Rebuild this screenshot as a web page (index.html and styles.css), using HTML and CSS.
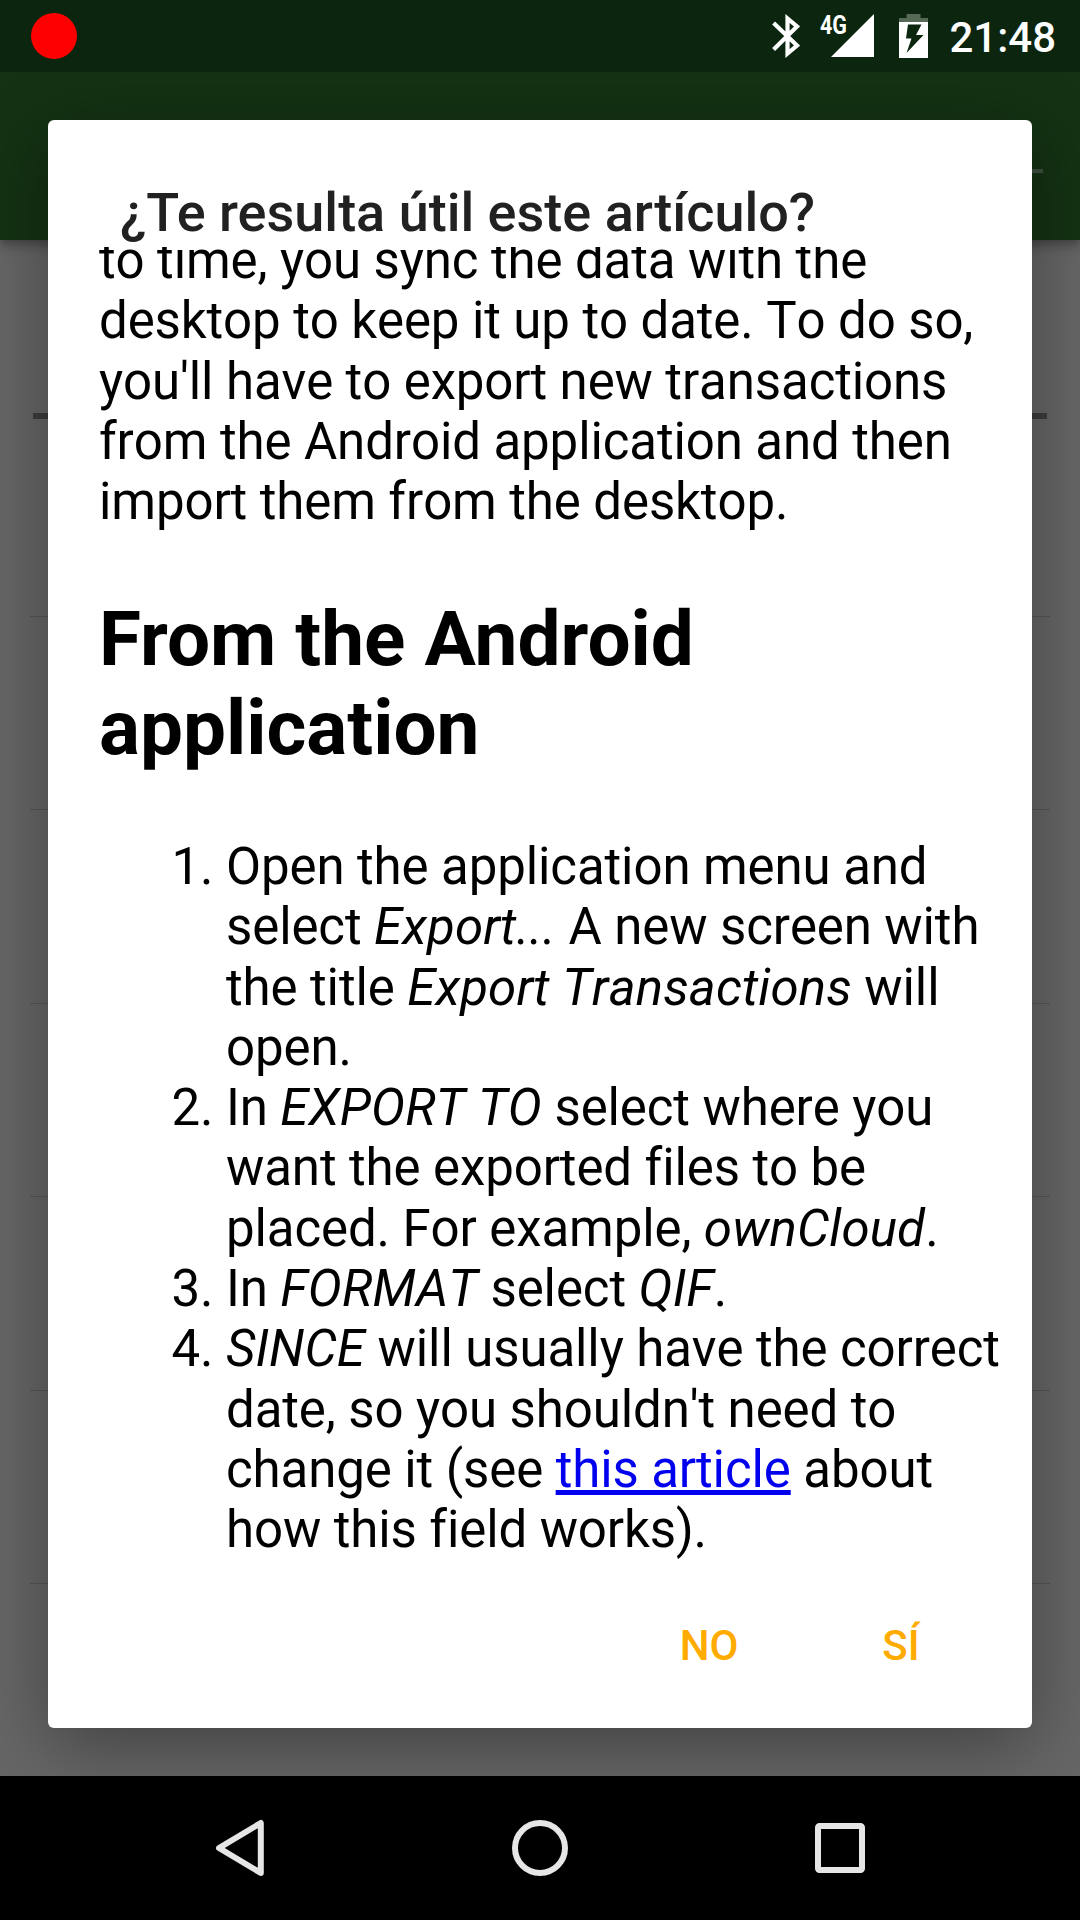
FILE: index.html
```html
<!DOCTYPE html>
<html lang="es">
<head>
<meta charset="utf-8">
<title>Ayuda</title>
<link rel="stylesheet" href="styles.css">
</head>
<body>
<div class="screen">
  <header class="status-bar">
    <span class="record-dot"></span>
    <svg class="status-icon bluetooth" width="28" height="44" viewBox="0 0 28 44" fill="none" stroke="#fff" stroke-width="4.2"><path d="M1.600 9 25 31.500 15.500 39.500V4.500L25 12.500 1.600 35.500"/></svg>
    <span class="network">4G</span>
    <svg class="status-icon signal" width="43" height="43" viewBox="0 0 43 43"><path d="M43 0V43H0Z" fill="#fff"/></svg>
    <svg class="status-icon battery" width="29" height="44" viewBox="0 0 29 44"><path d="M7.500 0H21.500V4H29V8H0V4H7.500Z" fill="#566856"/><path fill="#fff" fill-rule="evenodd" d="M0 8H29V44H0ZM9 10.500 7 24.500H12.500L7.500 39 24.500 21H17L22.500 10.500Z"/></svg>
    <time class="clock">21:48</time>
  </header>
  <div class="toolbar"><div class="toolbar-line"></div></div>
  <main class="page">
    <div class="field"></div>
    <div class="row"></div><div class="row"></div><div class="row"></div>
    <div class="row"></div><div class="row"></div><div class="row"></div>
  </main>
  <nav class="nav-bar">
    <svg class="nav-icon" width="60" height="60" viewBox="0 0 60 60"><path d="M9 30 50.800 5V55Z"/></svg>
    <svg class="nav-icon" width="60" height="60" viewBox="0 0 60 60"><circle cx="30" cy="30" r="25"/></svg>
    <svg class="nav-icon" width="60" height="60" viewBox="0 0 60 60"><rect x="8" y="8" width="44" height="44" rx="1.500"/></svg>
  </nav>
  <section class="dialog">
    <h1 class="dialog-title">¿Te resulta útil este artículo?</h1>
    <div class="article">
      <p class="intro">to time, you sync the data with the desktop to keep it up to date. To do so, you'll have to export new transactions from the Android application and then import them from the desktop.</p>
      <h2 class="heading">From the Android application</h2>
      <ol class="steps">
        <li>Open the application menu and select <em>Export...</em> A new screen with the title <em>Export Transactions</em> will open.</li>
        <li>In <em>EXPORT TO</em> select where you want the exported files to be placed. For example, <em>ownCloud</em>.</li>
        <li>In <em>FORMAT</em> select <em>QIF</em>.</li>
        <li><em>SINCE</em> will usually have the correct date, so you shouldn't need to change it (see <a class="link" href="#">this article</a> about how this field works).</li>
      </ol>
    </div>
    <div class="actions">
      <button class="action">NO</button>
      <button class="action">SÍ</button>
    </div>
  </section>
</div>
</body>
</html>
```
FILE: styles.css
```css
* { box-sizing: border-box; }
body { margin: 0; font-family: Roboto, "Noto Sans", sans-serif; background: #000; }
.screen { position: relative; width: 1080px; height: 1920px; overflow: hidden; display: flex; flex-direction: column; }

.status-bar { height: 72px; flex: none; position: relative; z-index: 2; background: #0c250e; display: flex; align-items: flex-start; padding: 0 24px 0 31px; color: #fff; }
.record-dot { width: 46px; height: 46px; margin: 13px auto 0 0; border-radius: 50%; background: #f00; }
.status-icon { display: block; flex: none; }
.bluetooth { margin-top: 14px; }
.network { width: 27px; margin: 14px 0 0 20px; font-size: 25px; line-height: 24px; font-weight: 700; transform: scaleX(.86); transform-origin: 0 0; }
.signal { margin: 14px 25px 0 -16px; }
.battery { margin-top: 14px; }
.clock { margin-left: 21px; font-size: 42px; font-weight: 500; line-height: 75px; }

.toolbar { height: 168px; flex: none; background: #143214; padding: 97px 37px 0 540px; position: relative; box-shadow: 0 4px 12px rgba(0,0,0,.4); }
.toolbar-line { height: 4px; background: #3f4f3f; }

.page { flex: 1; background: #666; padding: 173px 30px 0; }
.field { height: 6px; margin: 0 3px 4px; background: #3c3c3c; }
.row { height: 193.500px; border-bottom: 1px solid #555; }

.nav-bar { height: 144px; flex: none; position: relative; z-index: 2; background: #000; display: flex; justify-content: center; gap: 240px; align-items: center; }
.nav-icon { fill: none; stroke: #e6e6e6; stroke-width: 6; stroke-linejoin: round; }

.dialog { position: absolute; z-index: 1; left: 48px; top: 120px; width: 984px; height: 1608px; border-radius: 6px; background: #fff; box-shadow: 0 18px 72px rgba(0,0,0,.36); display: flex; flex-direction: column; }
.dialog-title { margin: 0; height: 127px; flex: none; padding: 61px 0 0 72px; font-size: 54px; line-height: 64px; font-weight: 500; color: #212121; }
.article { height: 1323px; flex: none; overflow: hidden; padding: 0 24px 0 51px; font-size: 51px; line-height: 60.300px; letter-spacing: -0.110px; font-kerning: none; font-variant-ligatures: none; color: #000; }
.intro { margin: -16px 0 0; }
.heading { margin: 62.300px 0 64.200px; font-size: 76.500px; line-height: 89px; font-weight: 700; letter-spacing: 0; font-kerning: normal; }
.steps { margin: 0; padding-left: 127px; }
.steps em { letter-spacing: 0.120px; }
.link { color: #00e; text-decoration: underline; }
.actions { flex: 1; display: flex; justify-content: flex-end; align-items: flex-start; padding-right: 35px; }
.action { min-width: 192px; height: 108px; margin-top: 22px; padding: 0; border: 0; background: none; font: 500 42px/108px Roboto, sans-serif; color: #ffab00; text-align: center; }
```
